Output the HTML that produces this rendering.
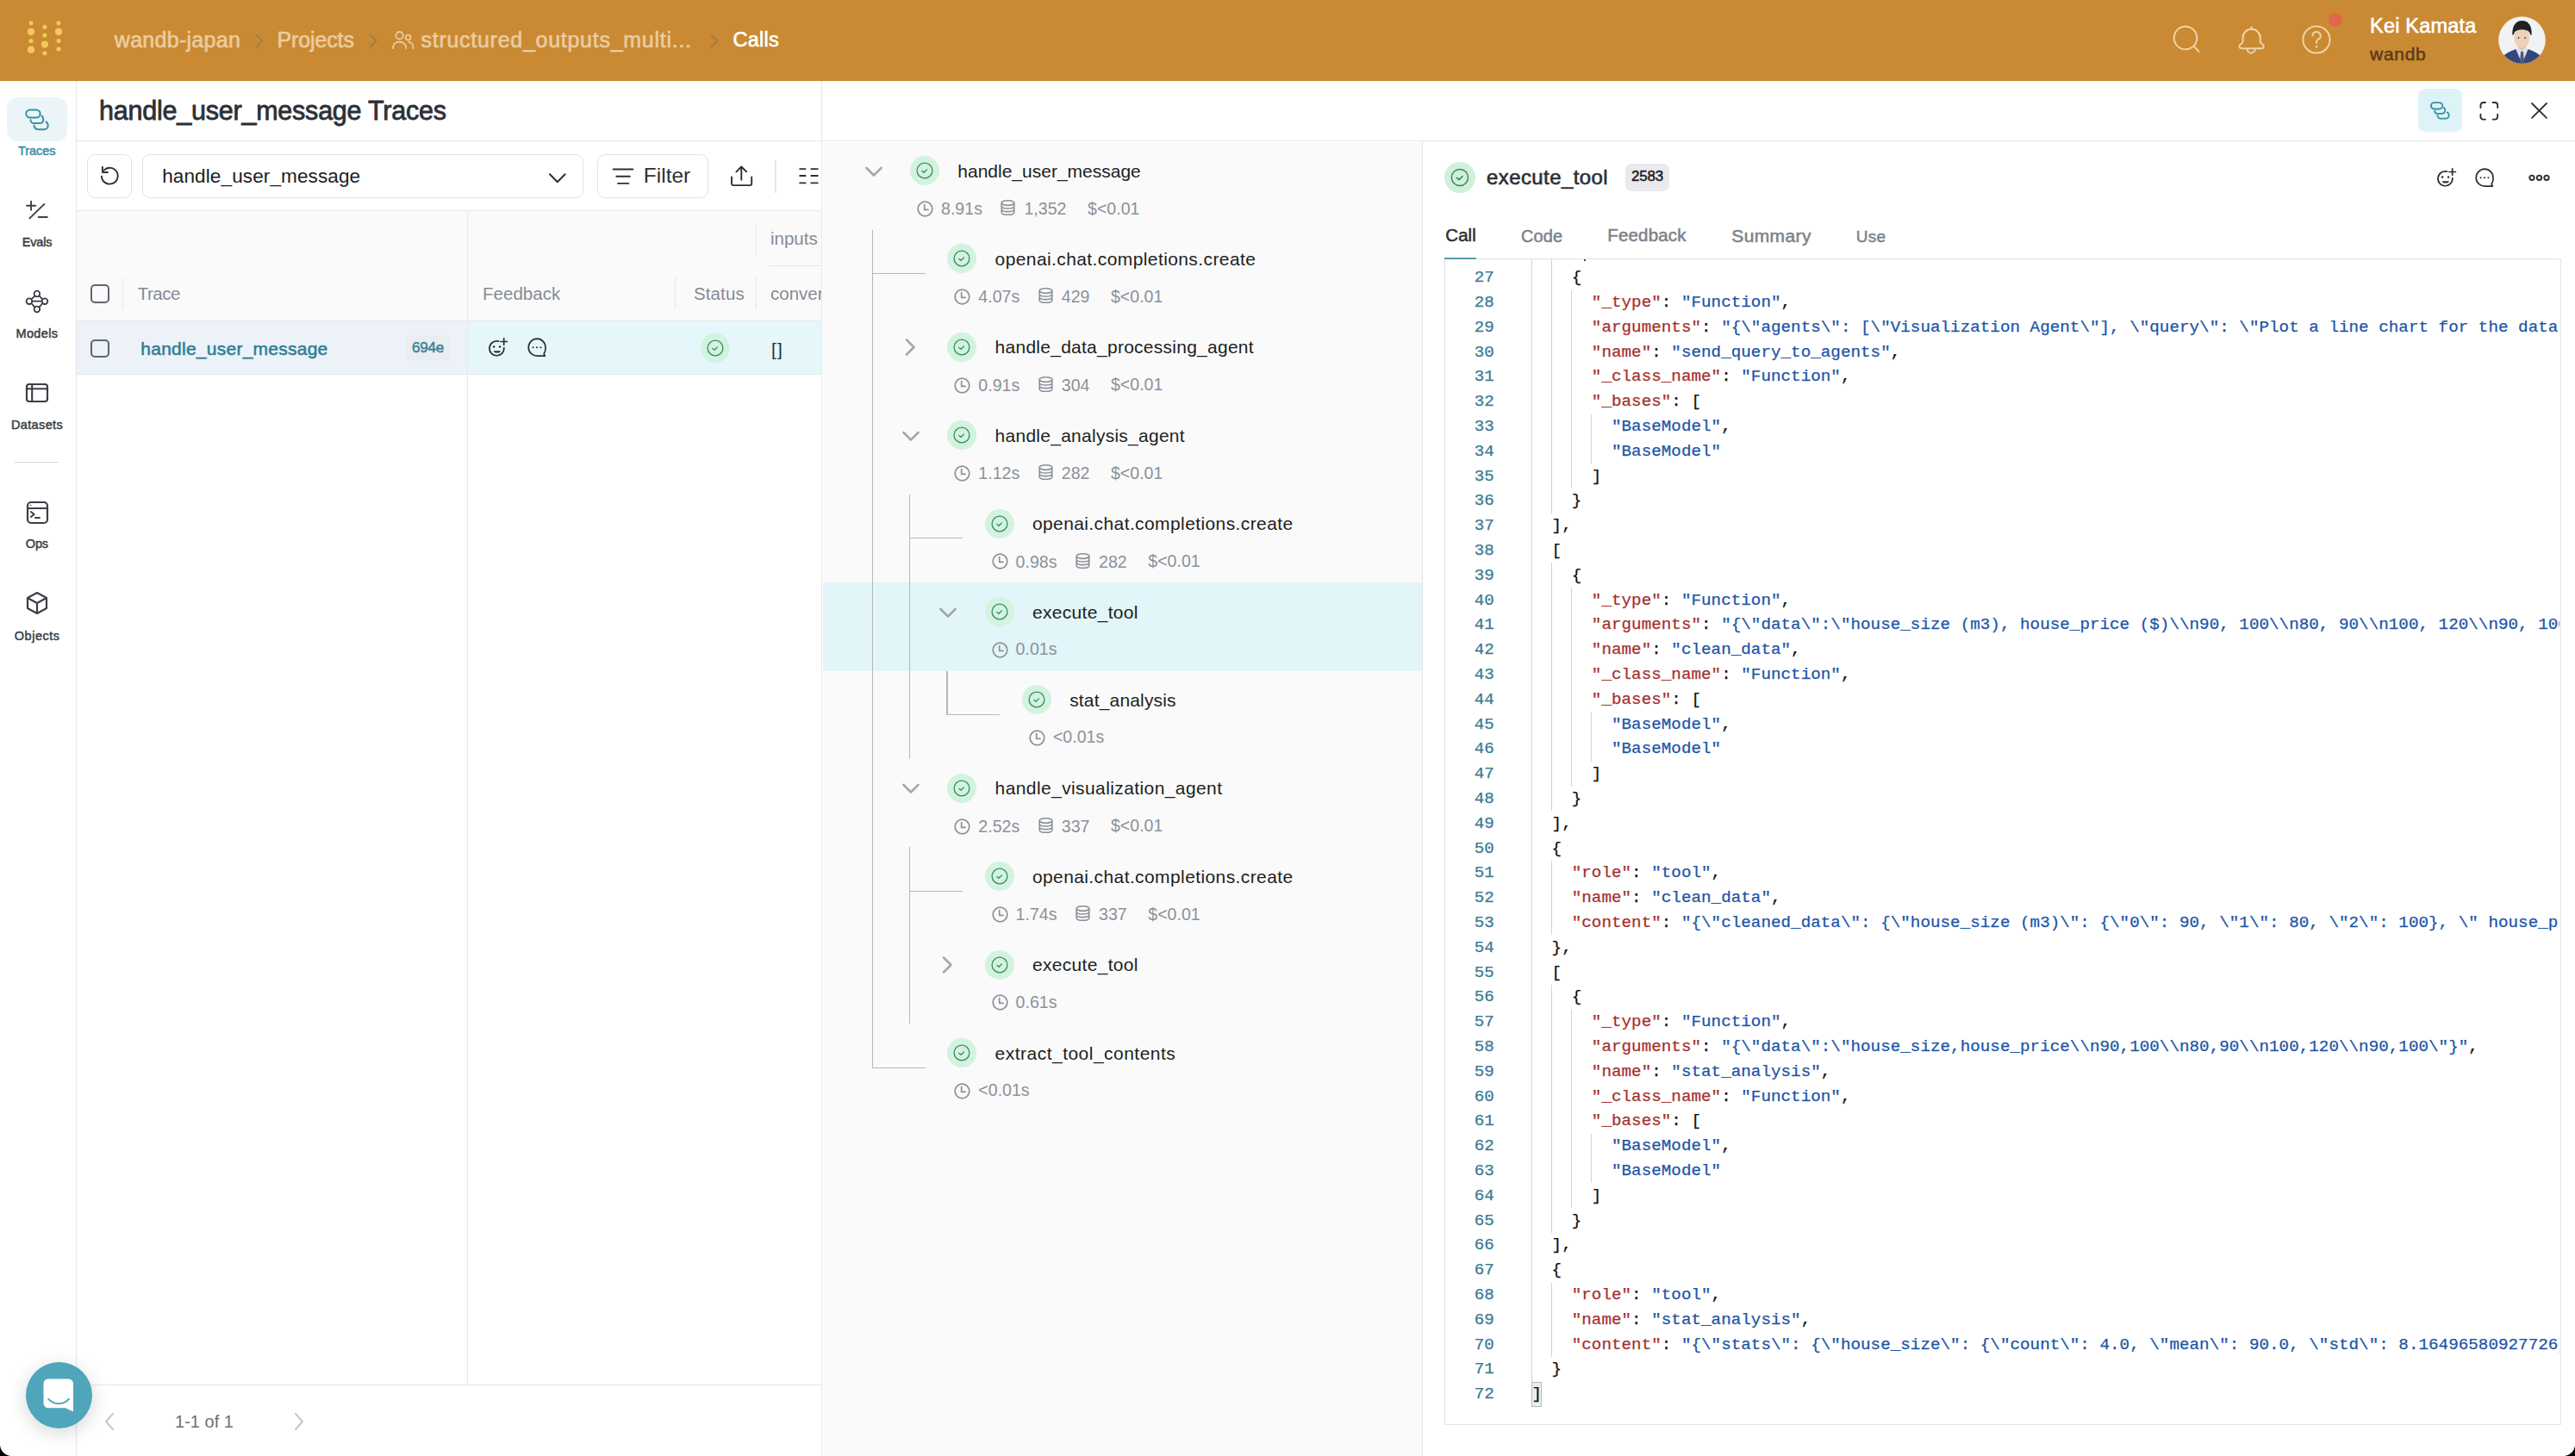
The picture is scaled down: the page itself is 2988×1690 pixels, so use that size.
<!DOCTYPE html><html><head><meta charset="utf-8"><style>*{margin:0;padding:0}html,body{width:2988px;height:1690px;overflow:hidden;background:#fff}
body{position:relative;font-family:'Liberation Sans',sans-serif}
.t{position:absolute;line-height:1;white-space:pre}
.cd{-webkit-text-stroke:0.25px currentColor}
.met span{position:absolute}</style></head><body><div style="position:absolute;left:0.00px;top:0.00px;width:2988.00px;height:94.00px;background:#c98a33"></div>
<svg style="position:absolute;left:0.00px;top:0.00px;" width="100" height="94" viewBox="0 0 100 94" fill="none"><circle cx="36" cy="26.8" r="2.5" fill="#f4c95a"/><circle cx="36" cy="36.8" r="4.1" fill="#f4c95a"/><circle cx="36" cy="47.4" r="2.5" fill="#f4c95a"/><circle cx="36" cy="57.7" r="4.1" fill="#f4c95a"/><circle cx="51.9" cy="31.3" r="2.5" fill="#f4c95a"/><circle cx="51.9" cy="40.9" r="2.5" fill="#f4c95a"/><circle cx="51.9" cy="51.5" r="4.1" fill="#f4c95a"/><circle cx="51.9" cy="61.8" r="2.5" fill="#f4c95a"/><circle cx="68" cy="26.8" r="2.5" fill="#f4c95a"/><circle cx="68" cy="36.8" r="4.1" fill="#f4c95a"/><circle cx="68" cy="47.4" r="2.5" fill="#f4c95a"/><circle cx="68" cy="57" r="2.5" fill="#f4c95a"/></svg>
<div class="t" style="left:132.80px;top:33.85px;font-size:25px;color:#ebcc9e;-webkit-text-stroke:0.65px #ebcc9e;letter-spacing:0.283px;">wandb-japan</div>
<svg style="position:absolute;left:294.50px;top:38.00px;" width="12" height="19" viewBox="0 0 12 19" fill="none"><path d="M2.5 2.5 L9.5 9.5 L2.5 16.5" stroke="#9a7a4a" stroke-width="1.7" stroke-linecap="round" stroke-linejoin="round"/></svg>
<div class="t" style="left:321.60px;top:33.85px;font-size:25px;color:#ebcc9e;-webkit-text-stroke:0.65px #ebcc9e;letter-spacing:-0.145px;">Projects</div>
<svg style="position:absolute;left:427.00px;top:38.00px;" width="12" height="19" viewBox="0 0 12 19" fill="none"><path d="M2.5 2.5 L9.5 9.5 L2.5 16.5" stroke="#9a7a4a" stroke-width="1.7" stroke-linecap="round" stroke-linejoin="round"/></svg>
<svg style="position:absolute;left:454.00px;top:35.00px;" width="28" height="24" viewBox="0 0 28 24" fill="none"><circle cx="9.6" cy="6.2" r="4.2" stroke="#ebcc9e" stroke-width="1.8"/><path d="M2 21 v-1 a7.6 6.5 0 0 1 15.2 0 v1" stroke="#ebcc9e" stroke-width="1.8" stroke-linecap="round"/><circle cx="19.6" cy="8.6" r="2.9" stroke="#ebcc9e" stroke-width="1.8"/><path d="M20.5 14 a4.8 5 0 0 1 4.8 5 v2" stroke="#ebcc9e" stroke-width="1.8" stroke-linecap="round"/></svg>
<div class="t" style="left:488.50px;top:33.85px;font-size:25px;color:#ebcc9e;-webkit-text-stroke:0.65px #ebcc9e;letter-spacing:0.727px;">structured_outputs_multi...</div>
<svg style="position:absolute;left:823.00px;top:38.00px;" width="12" height="19" viewBox="0 0 12 19" fill="none"><path d="M2.5 2.5 L9.5 9.5 L2.5 16.5" stroke="#9a7a4a" stroke-width="1.7" stroke-linecap="round" stroke-linejoin="round"/></svg>
<div class="t" style="left:850.50px;top:35.12px;font-size:23.5px;color:#ffffff;-webkit-text-stroke:0.61px #ffffff;letter-spacing:0.241px;">Calls</div>
<svg style="position:absolute;left:2518.00px;top:28.00px;" width="38" height="38" viewBox="0 0 38 38" fill="none"><circle cx="18" cy="16" r="13.3" stroke="#efd3a6" stroke-width="2"/><path d="M27.8 25.8 L33.5 32" stroke="#efd3a6" stroke-width="2" stroke-linecap="round"/></svg>
<svg style="position:absolute;left:2594.00px;top:28.00px;" width="36" height="38" viewBox="0 0 36 38" fill="none"><path d="M18.65 3.6 V5.8" stroke="#efd3a6" stroke-width="2.2" stroke-linecap="round"/><path d="M8.5 20.5 V16 A10.15 10.15 0 0 1 28.8 16 V20.5 C28.8 22.5 32.8 23.5 32.8 25.4 C32.8 27.1 31.8 28.2 30.1 28.2 H7.2 C5.5 28.2 4.5 27.1 4.5 25.4 C4.5 23.5 8.5 22.5 8.5 20.5 Z M13.6 28.2 A4.65 5.2 0 0 0 22.9 28.2" stroke="#efd3a6" stroke-width="2" stroke-linejoin="round"/></svg>
<svg style="position:absolute;left:2670.00px;top:29.00px;" width="36" height="36" viewBox="0 0 36 36" fill="none"><circle cx="18" cy="17" r="15.6" stroke="#efd3a6" stroke-width="2"/><path d="M13.5 12.5 a4.6 4.6 0 1 1 6.6 4.2 c-1.4 0.8 -2.1 1.5 -2.1 3.3 v1" stroke="#efd3a6" stroke-width="2" stroke-linecap="round"/><circle cx="18" cy="25.2" r="1.3" fill="#efd3a6"/></svg>
<div style="position:absolute;left:2701.50px;top:15.30px;width:16.00px;height:16.00px;background:#e0674a;border-radius:50%"></div>
<div class="t" style="left:2750.00px;top:18.82px;font-size:23.5px;color:#ffffff;-webkit-text-stroke:0.61px #ffffff;letter-spacing:0.213px;">Kei Kamata</div>
<div class="t" style="left:2750.00px;top:52.15px;font-size:21px;color:#5e3a1a;-webkit-text-stroke:0.55px #5e3a1a;letter-spacing:0.727px;">wandb</div>
<svg style="position:absolute;left:2898.50px;top:18.50px;" width="55" height="55" viewBox="0 0 55 55" fill="none"><defs><clipPath id="av"><circle cx="27.5" cy="27.5" r="27.3"/></clipPath></defs><g clip-path="url(#av)"><rect width="55" height="55" fill="#f1f2f4"/><rect x="23" y="33" width="9" height="7" fill="#e3bea3"/><ellipse cx="27.3" cy="24.6" rx="8.9" ry="12.6" fill="#efd0ba"/><path d="M16.5 22 C15.5 12 20 5 27.5 5 C35 5 39.5 11 38.6 22 L37 21 C36.5 17 33 15.5 27.5 15.2 C22 15.5 18.5 17 18 21 Z" fill="#202126"/><circle cx="23.6" cy="24.8" r="0.9" fill="#3a2a22"/><circle cx="31.2" cy="24.8" r="0.9" fill="#3a2a22"/><path d="M2 55 L7 45 C12 41 18 38.8 21.5 38 L27.5 55 L33.5 38 C37 38.8 43 41 48 45 L53 55 Z" fill="#34477d"/><path d="M20.5 38.3 L27.5 55 L34.5 38.3 L31.2 36.8 L27.5 39.6 L23.8 36.8 Z" fill="#dbe2ee"/><path d="M26 41.5 L24.8 55 H30.2 L29 41.5 L27.5 40 Z" fill="#4d5b7a"/></g></svg>
<div style="position:absolute;left:88.00px;top:94.00px;width:1.00px;height:1596.00px;background:#e4e6ea"></div>
<div style="position:absolute;left:8.00px;top:113.00px;width:70.00px;height:50.50px;background:#ebf4f7;border-radius:12px"></div>
<svg style="position:absolute;left:28.00px;top:125.00px;" width="30" height="28" viewBox="0 0 30 28" fill="none"><rect x="2.3" y="2.5" width="16.3" height="9.1" rx="4.5" stroke="#3a8fa5" stroke-width="2"/><path d="M7.5 14.2 A4 4 0 0 0 11.5 18.1 H18.2 A4 4 0 0 0 22.2 14.1 V13 A4 4 0 0 0 20.3 9.6 M11.6 20.5 A4.5 4.5 0 0 0 16.1 25.2 H23.2 A4.5 4.5 0 0 0 27.7 20.7 V20 A4.5 4.5 0 0 0 25.4 16.3" stroke="#3a8fa5" stroke-width="2" stroke-linecap="round"/></svg>
<div class="t" style="left:20.90px;top:168.28px;font-size:14.5px;color:#3a8fa5;-webkit-text-stroke:0.50px #3a8fa5;letter-spacing:-0.016px;">Traces</div>
<svg style="position:absolute;left:30.00px;top:232.00px;" width="27" height="24" viewBox="0 0 27 24" fill="none"><path d="M1.1 6.7 H11.1 M6.1 1.7 V11.7 M4.4 21.4 L21.4 4.9 M14.7 20 H24.8" stroke="#3b3f45" stroke-width="1.9" stroke-linecap="round"/></svg>
<div class="t" style="left:25.80px;top:274.18px;font-size:14.5px;color:#3b3f45;-webkit-text-stroke:0.50px #3b3f45;letter-spacing:-0.217px;">Evals</div>
<svg style="position:absolute;left:29.00px;top:336.00px;" width="28" height="28" viewBox="0 0 28 28" fill="none"><circle cx="13.9" cy="5" r="3.3" stroke="#3b3f45" stroke-width="1.8"/><circle cx="13.9" cy="23" r="3.3" stroke="#3b3f45" stroke-width="1.8"/><circle cx="4.9" cy="13.7" r="3.3" stroke="#3b3f45" stroke-width="1.8"/><circle cx="23" cy="13.7" r="3.3" stroke="#3b3f45" stroke-width="1.8"/><path d="M8.2 13.7 H19.7 M11.5 7.3 L7.3 11.4 M16.3 7.3 L20.6 11.4 M11.5 20.7 L7.3 16 M16.3 20.7 L20.6 16" stroke="#3b3f45" stroke-width="1.8"/></svg>
<div class="t" style="left:18.50px;top:380.38px;font-size:14.5px;color:#3b3f45;-webkit-text-stroke:0.50px #3b3f45;letter-spacing:0.350px;">Models</div>
<svg style="position:absolute;left:29.00px;top:444.00px;" width="28" height="24" viewBox="0 0 28 24" fill="none"><rect x="2" y="2" width="24" height="20" rx="3" stroke="#3b3f45" stroke-width="2.2"/><path d="M2 7.3 h24 M8.2 2 v20" stroke="#3b3f45" stroke-width="2.1"/></svg>
<div class="t" style="left:13.00px;top:485.57px;font-size:14.5px;color:#3b3f45;-webkit-text-stroke:0.50px #3b3f45;letter-spacing:0.352px;">Datasets</div>
<div style="position:absolute;left:17.00px;top:536.00px;width:51.00px;height:1.20px;background:#d5d8dc"></div>
<svg style="position:absolute;left:30.00px;top:581.00px;" width="27" height="28" viewBox="0 0 27 28" fill="none"><rect x="2" y="2" width="23" height="24" rx="4" stroke="#3b3f45" stroke-width="2.2"/><path d="M2 9 h23" stroke="#3b3f45" stroke-width="2"/><path d="M6 13 l3.5 3 l-3.5 3 M11 20 h5" stroke="#3b3f45" stroke-width="2" stroke-linecap="round"/><circle cx="5.5" cy="5.5" r="0.8" fill="#3b3f45"/></svg>
<div class="t" style="left:29.80px;top:624.27px;font-size:14.5px;color:#3b3f45;-webkit-text-stroke:0.50px #3b3f45;letter-spacing:-0.197px;">Ops</div>
<svg style="position:absolute;left:29.00px;top:686.00px;" width="28" height="28" viewBox="0 0 28 28" fill="none"><path d="M14 2 L25 8 V20 L14 26 L3 20 V8 Z M3 8 L14 14 L25 8 M14 14 V26" stroke="#3b3f45" stroke-width="2.2" stroke-linejoin="round"/></svg>
<div class="t" style="left:16.80px;top:730.57px;font-size:14.5px;color:#3b3f45;-webkit-text-stroke:0.50px #3b3f45;letter-spacing:0.505px;">Objects</div>
<div class="t" style="left:115.00px;top:112.77px;font-size:30.5px;color:#2b3036;-webkit-text-stroke:0.79px #2b3036;letter-spacing:-0.224px;">handle_user_message Traces</div>
<div style="position:absolute;left:89.00px;top:163.00px;width:2899.00px;height:1.00px;background:#e5e7eb"></div>
<div style="position:absolute;left:953.00px;top:94.00px;width:1.00px;height:1596.00px;background:#e5e7eb"></div>
<div style="position:absolute;left:101.00px;top:179.00px;width:52.00px;height:51.00px;border:1.5px solid #dfe2e6;border-radius:9px;box-sizing:border-box;background:#fff"></div>
<svg style="position:absolute;left:113.00px;top:190.00px;" width="28" height="28" viewBox="0 0 28 28" fill="none"><path d="M7.6 7.6 A9.4 9.4 0 1 1 4.9 14.6" stroke="#2b3036" stroke-width="1.9" stroke-linecap="round"/><path d="M5.9 3.6 V10 H12" stroke="#2b3036" stroke-width="1.9" stroke-linecap="round" stroke-linejoin="round"/></svg>
<div style="position:absolute;left:165.00px;top:179.00px;width:512.00px;height:51.00px;border:1.5px solid #dfe2e6;border-radius:9px;box-sizing:border-box;background:#fff"></div>
<div class="t" style="left:188.20px;top:193.59px;font-size:22.6px;color:#1c1e21;letter-spacing:0.077px;">handle_user_message</div>
<svg style="position:absolute;left:634.00px;top:198.00px;" width="26" height="18" viewBox="0 0 26 18" fill="none"><path d="M4 4.2 L12.8 13.2 L21.6 4.2" stroke="#2b3036" stroke-width="2" stroke-linecap="round" stroke-linejoin="round"/></svg>
<div style="position:absolute;left:693.40px;top:179.00px;width:128.50px;height:51.00px;border:1.5px solid #dfe2e6;border-radius:9px;box-sizing:border-box;background:#fff"></div>
<svg style="position:absolute;left:709.00px;top:193.00px;" width="30" height="24" viewBox="0 0 30 24" fill="none"><path d="M2.6 3.5 H25.4 M6.3 11.7 H21.9 M8 19.9 H20.3" stroke="#2b3036" stroke-width="1.9" stroke-linecap="round"/></svg>
<div class="t" style="left:746.80px;top:192.38px;font-size:24.5px;color:#2b3036;">Filter</div>
<svg style="position:absolute;left:846.00px;top:191.00px;" width="28" height="28" viewBox="0 0 28 28" fill="none"><path d="M14.3 17.7 V3 M8.4 8.4 L14.3 2.5 L20.2 8.4" stroke="#2b3036" stroke-width="1.9" stroke-linecap="round" stroke-linejoin="round"/><path d="M3 14.4 V22.3 a1.8 1.8 0 0 0 1.8 1.8 H24.4 a1.8 1.8 0 0 0 1.8-1.8 V14.4" stroke="#2b3036" stroke-width="1.9" stroke-linecap="round"/></svg>
<div style="position:absolute;left:899.00px;top:186.00px;width:1.50px;height:38.00px;background:#e5e7eb"></div>
<svg style="position:absolute;left:926.00px;top:193.00px;" width="28" height="24" viewBox="0 0 28 24" fill="none"><path d="M2.2 3.1 h6.4 M2.2 11 h6.4 M2.2 19.4 h6.4 M15.3 3.1 h7.5 M15.3 11 h7.5 M15.3 19.4 h7.5" stroke="#2b3036" stroke-width="1.9" stroke-linecap="round"/></svg>
<div style="position:absolute;left:953.00px;top:94.00px;width:1.00px;height:1596.00px;background:#e5e7eb"></div>
<div style="position:absolute;left:89.00px;top:244.00px;width:864.00px;height:1.00px;background:#e5e7eb"></div>
<div style="position:absolute;left:89.00px;top:245.00px;width:864.00px;height:127.00px;background:#fafafa"></div>
<div style="position:absolute;left:89.00px;top:372.00px;width:864.00px;height:1.00px;background:#e5e7eb"></div>
<div style="position:absolute;left:89.00px;top:373.00px;width:453.00px;height:61.00px;background:#edf2f8"></div>
<div style="position:absolute;left:543.00px;top:373.00px;width:410.00px;height:61.00px;background:#e5f7fa"></div>
<div style="position:absolute;left:89.00px;top:434.00px;width:864.00px;height:1.00px;background:#e5e7eb"></div>
<div style="position:absolute;left:542.00px;top:245.00px;width:1.00px;height:1362.00px;background:#e5e7eb"></div>
<div style="position:absolute;left:142.00px;top:322.00px;width:1.20px;height:37.00px;background:#e5e7eb"></div>
<div style="position:absolute;left:782.50px;top:322.00px;width:1.50px;height:37.00px;background:#e5e7eb"></div>
<div style="position:absolute;left:876.50px;top:322.00px;width:1.50px;height:37.00px;background:#e5e7eb"></div>
<div style="position:absolute;left:876.50px;top:258.50px;width:1.50px;height:37.00px;background:#e5e7eb"></div>
<div style="position:absolute;left:893.00px;top:307.50px;width:60.00px;height:1.50px;background:#e5e7eb"></div>
<div style="position:absolute;left:105.30px;top:330.30px;width:21.50px;height:21.50px;border:2px solid #5f6670;border-radius:5px;box-sizing:border-box"></div>
<div style="position:absolute;left:105.30px;top:393.50px;width:21.50px;height:21.50px;border:2px solid #5f6670;border-radius:5px;box-sizing:border-box"></div>
<div class="t" style="left:159.70px;top:331.38px;font-size:20.5px;color:#858b94;letter-spacing:-0.460px;">Trace</div>
<div class="t" style="left:560.00px;top:331.38px;font-size:20.5px;color:#858b94;letter-spacing:0.024px;">Feedback</div>
<div class="t" style="left:805.00px;top:331.38px;font-size:20.5px;color:#858b94;letter-spacing:0.115px;">Status</div>
<div style="position:absolute;left:893px;top:250px;width:60px;height:120px;overflow:hidden">
<div class="t" style="left:1.00px;top:17.07px;font-size:20.5px;color:#858b94;">inputs</div>
<div class="t" style="left:1.00px;top:81.38px;font-size:20.5px;color:#858b94;">conversation</div>
</div>
<div class="t" style="left:163.30px;top:394.15px;font-size:21px;color:#2f7f93;-webkit-text-stroke:0.55px #2f7f93;letter-spacing:0.251px;">handle_user_message</div>
<div style="position:absolute;left:471.00px;top:388.70px;width:51.70px;height:30.70px;background:#eaedf1;border-radius:6px"></div>
<div class="t" style="left:477.90px;top:394.55px;font-size:17px;color:#3a8097;-webkit-text-stroke:0.50px #3a8097;letter-spacing:-0.143px;">694e</div>
<svg style="position:absolute;left:565.80px;top:392.00px;" width="26" height="26" viewBox="0 0 26 26" fill="none"><path d="M12.6 4.14 A8.45 8.45 0 1 0 18.8 11.56" stroke="#2b3036" stroke-width="1.7" stroke-linecap="round"/><circle cx="7.1" cy="10.4" r="1.25" fill="#2b3036"/><circle cx="14.1" cy="10.4" r="1.25" fill="#2b3036"/><path d="M6.8 15.2 H14.8 A4 2.4 0 0 1 6.8 15.2 Z" fill="#2b3036"/><path d="M18.7 0.8 v7.4 M15 4.5 h7.4" stroke="#2b3036" stroke-width="1.7" stroke-linecap="round"/></svg>
<svg style="position:absolute;left:610.50px;top:391.00px;" width="26" height="26" viewBox="0 0 26 26" fill="none"><path d="M12 2.2 A10 10 0 1 0 12.5 22.2 H21.3 L20.2 19.6 A10.2 10.2 0 0 0 22 12.3 A10 10 0 0 0 12 2.2 Z" stroke="#2b3036" stroke-width="1.7" stroke-linejoin="round"/><circle cx="7.6" cy="12.3" r="1.05" fill="#2b3036"/><circle cx="12" cy="12.3" r="1.05" fill="#2b3036"/><circle cx="16.4" cy="12.3" r="1.05" fill="#2b3036"/></svg>
<div style="position:absolute;left:813.00px;top:387.40px;width:34.00px;height:34.00px;background:#d2f3df;border-radius:50%"></div>
<svg style="position:absolute;left:813.00px;top:387.40px;" width="34" height="34" viewBox="0 0 34 34" fill="none"><circle cx="17" cy="17" r="8.9" stroke="#3a8a5c" stroke-width="1.3"/><path d="M13.9 17.4 L16.1 19.3 L19.5 15.9" stroke="#3a8a5c" stroke-width="1.3" stroke-linecap="round" stroke-linejoin="round"/></svg>
<div class="t" style="left:895.00px;top:395.15px;font-size:21px;color:#2b3036;letter-spacing:1.2px;">[]</div>
<div style="position:absolute;left:89.00px;top:1607.00px;width:864.00px;height:1.00px;background:#e5e7eb"></div>
<svg style="position:absolute;left:118.00px;top:1638.00px;" width="18" height="24" viewBox="0 0 18 24" fill="none"><path d="M13 3 L5 12 L13 21" stroke="#c2c6cc" stroke-width="2" stroke-linecap="round" stroke-linejoin="round"/></svg>
<div class="t" style="left:203.00px;top:1640.00px;font-size:20px;color:#6b7079;letter-spacing:0.025px;">1-1 of 1</div>
<svg style="position:absolute;left:338.00px;top:1638.00px;" width="18" height="24" viewBox="0 0 18 24" fill="none"><path d="M5 3 L13 12 L5 21" stroke="#c2c6cc" stroke-width="2" stroke-linecap="round" stroke-linejoin="round"/></svg>
<div style="position:absolute;left:954.50px;top:164.50px;width:695.50px;height:1525.50px;background:#fafafa"></div>
<div style="position:absolute;left:1650.00px;top:164.00px;width:1.00px;height:1526.00px;background:#e2e4e8"></div>
<div style="position:absolute;left:1056.00px;top:181.00px;width:34.00px;height:34.00px;background:#d2f3df;border-radius:50%"></div>
<svg style="position:absolute;left:1056.00px;top:181.00px;" width="34" height="34" viewBox="0 0 34 34" fill="none"><circle cx="17" cy="17" r="8.9" stroke="#3a8a5c" stroke-width="1.3"/><path d="M13.9 17.4 L16.1 19.3 L19.5 15.9" stroke="#3a8a5c" stroke-width="1.3" stroke-linecap="round" stroke-linejoin="round"/></svg>
<svg style="position:absolute;left:1002.50px;top:191.50px;" width="22" height="16" viewBox="0 0 22 16" fill="none"><path d="M2.5 3 L11 11.5 L19.5 3" stroke="#a3a8af" stroke-width="2.6" stroke-linecap="round" stroke-linejoin="round"/></svg>
<div class="t" style="left:1111.30px;top:187.55px;font-size:21px;color:#1c1e21;letter-spacing:0.001px;">handle_user_message</div>
<svg style="position:absolute;left:1064.00px;top:232.70px;" width="19" height="19" viewBox="0 0 19 19" fill="none"><circle cx="9.5" cy="9.5" r="8.3" stroke="#8b919a" stroke-width="1.7"/><path d="M8.7 4.6 V10.4 H13" stroke="#8b919a" stroke-width="1.7" stroke-linecap="round" stroke-linejoin="round"/></svg>
<div class="t" style="left:1092.00px;top:232.04px;font-size:19.6px;color:#8b919a">8.91s<svg width="17" height="18" viewBox="0 0 17 18" fill="none" style="vertical-align:-1.5px;margin-left:21.5px;margin-right:10px"><ellipse cx="8.5" cy="3.6" rx="7.3" ry="2.8" stroke="#8b919a" stroke-width="1.6"/><path d="M1.2 3.6 V14.4 c0 1.6 3.3 2.8 7.3 2.8 s7.3-1.2 7.3-2.8 V3.6 M1.2 7.2 c0 1.6 3.3 2.8 7.3 2.8 s7.3-1.2 7.3-2.8 M1.2 10.8 c0 1.6 3.3 2.8 7.3 2.8 s7.3-1.2 7.3-2.8" stroke="#8b919a" stroke-width="1.6"/></svg>1,352<span style="margin-left:24.5px">$&lt;0.01</span></div>
<div style="position:absolute;left:1099.30px;top:283.40px;width:34.00px;height:34.00px;background:#d2f3df;border-radius:50%"></div>
<svg style="position:absolute;left:1099.30px;top:283.40px;" width="34" height="34" viewBox="0 0 34 34" fill="none"><circle cx="17" cy="17" r="8.9" stroke="#3a8a5c" stroke-width="1.3"/><path d="M13.9 17.4 L16.1 19.3 L19.5 15.9" stroke="#3a8a5c" stroke-width="1.3" stroke-linecap="round" stroke-linejoin="round"/></svg>
<div class="t" style="left:1154.60px;top:289.95px;font-size:21px;color:#1c1e21;letter-spacing:0.400px;">openai.chat.completions.create</div>
<svg style="position:absolute;left:1107.30px;top:335.10px;" width="19" height="19" viewBox="0 0 19 19" fill="none"><circle cx="9.5" cy="9.5" r="8.3" stroke="#8b919a" stroke-width="1.7"/><path d="M8.7 4.6 V10.4 H13" stroke="#8b919a" stroke-width="1.7" stroke-linecap="round" stroke-linejoin="round"/></svg>
<div class="t" style="left:1135.30px;top:334.44px;font-size:19.6px;color:#8b919a">4.07s<svg width="17" height="18" viewBox="0 0 17 18" fill="none" style="vertical-align:-1.5px;margin-left:21.5px;margin-right:10px"><ellipse cx="8.5" cy="3.6" rx="7.3" ry="2.8" stroke="#8b919a" stroke-width="1.6"/><path d="M1.2 3.6 V14.4 c0 1.6 3.3 2.8 7.3 2.8 s7.3-1.2 7.3-2.8 V3.6 M1.2 7.2 c0 1.6 3.3 2.8 7.3 2.8 s7.3-1.2 7.3-2.8 M1.2 10.8 c0 1.6 3.3 2.8 7.3 2.8 s7.3-1.2 7.3-2.8" stroke="#8b919a" stroke-width="1.6"/></svg>429<span style="margin-left:24.5px">$&lt;0.01</span></div>
<div style="position:absolute;left:1099.30px;top:385.80px;width:34.00px;height:34.00px;background:#d2f3df;border-radius:50%"></div>
<svg style="position:absolute;left:1099.30px;top:385.80px;" width="34" height="34" viewBox="0 0 34 34" fill="none"><circle cx="17" cy="17" r="8.9" stroke="#3a8a5c" stroke-width="1.3"/><path d="M13.9 17.4 L16.1 19.3 L19.5 15.9" stroke="#3a8a5c" stroke-width="1.3" stroke-linecap="round" stroke-linejoin="round"/></svg>
<svg style="position:absolute;left:1047.80px;top:391.80px;" width="16" height="22" viewBox="0 0 16 22" fill="none"><path d="M4 2.5 L12.5 11 L4 19.5" stroke="#a3a8af" stroke-width="2.6" stroke-linecap="round" stroke-linejoin="round"/></svg>
<div class="t" style="left:1154.60px;top:392.35px;font-size:21px;color:#1c1e21;letter-spacing:0.256px;">handle_data_processing_agent</div>
<svg style="position:absolute;left:1107.30px;top:437.50px;" width="19" height="19" viewBox="0 0 19 19" fill="none"><circle cx="9.5" cy="9.5" r="8.3" stroke="#8b919a" stroke-width="1.7"/><path d="M8.7 4.6 V10.4 H13" stroke="#8b919a" stroke-width="1.7" stroke-linecap="round" stroke-linejoin="round"/></svg>
<div class="t" style="left:1135.30px;top:436.84px;font-size:19.6px;color:#8b919a">0.91s<svg width="17" height="18" viewBox="0 0 17 18" fill="none" style="vertical-align:-1.5px;margin-left:21.5px;margin-right:10px"><ellipse cx="8.5" cy="3.6" rx="7.3" ry="2.8" stroke="#8b919a" stroke-width="1.6"/><path d="M1.2 3.6 V14.4 c0 1.6 3.3 2.8 7.3 2.8 s7.3-1.2 7.3-2.8 V3.6 M1.2 7.2 c0 1.6 3.3 2.8 7.3 2.8 s7.3-1.2 7.3-2.8 M1.2 10.8 c0 1.6 3.3 2.8 7.3 2.8 s7.3-1.2 7.3-2.8" stroke="#8b919a" stroke-width="1.6"/></svg>304<span style="margin-left:24.5px">$&lt;0.01</span></div>
<div style="position:absolute;left:1099.30px;top:488.20px;width:34.00px;height:34.00px;background:#d2f3df;border-radius:50%"></div>
<svg style="position:absolute;left:1099.30px;top:488.20px;" width="34" height="34" viewBox="0 0 34 34" fill="none"><circle cx="17" cy="17" r="8.9" stroke="#3a8a5c" stroke-width="1.3"/><path d="M13.9 17.4 L16.1 19.3 L19.5 15.9" stroke="#3a8a5c" stroke-width="1.3" stroke-linecap="round" stroke-linejoin="round"/></svg>
<svg style="position:absolute;left:1045.80px;top:498.70px;" width="22" height="16" viewBox="0 0 22 16" fill="none"><path d="M2.5 3 L11 11.5 L19.5 3" stroke="#a3a8af" stroke-width="2.6" stroke-linecap="round" stroke-linejoin="round"/></svg>
<div class="t" style="left:1154.60px;top:494.75px;font-size:21px;color:#1c1e21;letter-spacing:0.258px;">handle_analysis_agent</div>
<svg style="position:absolute;left:1107.30px;top:539.90px;" width="19" height="19" viewBox="0 0 19 19" fill="none"><circle cx="9.5" cy="9.5" r="8.3" stroke="#8b919a" stroke-width="1.7"/><path d="M8.7 4.6 V10.4 H13" stroke="#8b919a" stroke-width="1.7" stroke-linecap="round" stroke-linejoin="round"/></svg>
<div class="t" style="left:1135.30px;top:539.24px;font-size:19.6px;color:#8b919a">1.12s<svg width="17" height="18" viewBox="0 0 17 18" fill="none" style="vertical-align:-1.5px;margin-left:21.5px;margin-right:10px"><ellipse cx="8.5" cy="3.6" rx="7.3" ry="2.8" stroke="#8b919a" stroke-width="1.6"/><path d="M1.2 3.6 V14.4 c0 1.6 3.3 2.8 7.3 2.8 s7.3-1.2 7.3-2.8 V3.6 M1.2 7.2 c0 1.6 3.3 2.8 7.3 2.8 s7.3-1.2 7.3-2.8 M1.2 10.8 c0 1.6 3.3 2.8 7.3 2.8 s7.3-1.2 7.3-2.8" stroke="#8b919a" stroke-width="1.6"/></svg>282<span style="margin-left:24.5px">$&lt;0.01</span></div>
<div style="position:absolute;left:1142.60px;top:590.60px;width:34.00px;height:34.00px;background:#d2f3df;border-radius:50%"></div>
<svg style="position:absolute;left:1142.60px;top:590.60px;" width="34" height="34" viewBox="0 0 34 34" fill="none"><circle cx="17" cy="17" r="8.9" stroke="#3a8a5c" stroke-width="1.3"/><path d="M13.9 17.4 L16.1 19.3 L19.5 15.9" stroke="#3a8a5c" stroke-width="1.3" stroke-linecap="round" stroke-linejoin="round"/></svg>
<div class="t" style="left:1197.90px;top:597.15px;font-size:21px;color:#1c1e21;letter-spacing:0.400px;">openai.chat.completions.create</div>
<svg style="position:absolute;left:1150.60px;top:642.30px;" width="19" height="19" viewBox="0 0 19 19" fill="none"><circle cx="9.5" cy="9.5" r="8.3" stroke="#8b919a" stroke-width="1.7"/><path d="M8.7 4.6 V10.4 H13" stroke="#8b919a" stroke-width="1.7" stroke-linecap="round" stroke-linejoin="round"/></svg>
<div class="t" style="left:1178.60px;top:641.64px;font-size:19.6px;color:#8b919a">0.98s<svg width="17" height="18" viewBox="0 0 17 18" fill="none" style="vertical-align:-1.5px;margin-left:21.5px;margin-right:10px"><ellipse cx="8.5" cy="3.6" rx="7.3" ry="2.8" stroke="#8b919a" stroke-width="1.6"/><path d="M1.2 3.6 V14.4 c0 1.6 3.3 2.8 7.3 2.8 s7.3-1.2 7.3-2.8 V3.6 M1.2 7.2 c0 1.6 3.3 2.8 7.3 2.8 s7.3-1.2 7.3-2.8 M1.2 10.8 c0 1.6 3.3 2.8 7.3 2.8 s7.3-1.2 7.3-2.8" stroke="#8b919a" stroke-width="1.6"/></svg>282<span style="margin-left:24.5px">$&lt;0.01</span></div>
<div style="position:absolute;left:954.50px;top:676.20px;width:695.50px;height:102.40px;background:#e2f5f8"></div>
<div style="position:absolute;left:1142.60px;top:693.00px;width:34.00px;height:34.00px;background:#d2f3df;border-radius:50%"></div>
<svg style="position:absolute;left:1142.60px;top:693.00px;" width="34" height="34" viewBox="0 0 34 34" fill="none"><circle cx="17" cy="17" r="8.9" stroke="#3a8a5c" stroke-width="1.3"/><path d="M13.9 17.4 L16.1 19.3 L19.5 15.9" stroke="#3a8a5c" stroke-width="1.3" stroke-linecap="round" stroke-linejoin="round"/></svg>
<svg style="position:absolute;left:1089.10px;top:703.50px;" width="22" height="16" viewBox="0 0 22 16" fill="none"><path d="M2.5 3 L11 11.5 L19.5 3" stroke="#a3a8af" stroke-width="2.6" stroke-linecap="round" stroke-linejoin="round"/></svg>
<div class="t" style="left:1197.90px;top:699.55px;font-size:21px;color:#1c1e21;letter-spacing:0.319px;">execute_tool</div>
<svg style="position:absolute;left:1150.60px;top:744.70px;" width="19" height="19" viewBox="0 0 19 19" fill="none"><circle cx="9.5" cy="9.5" r="8.3" stroke="#8b919a" stroke-width="1.7"/><path d="M8.7 4.6 V10.4 H13" stroke="#8b919a" stroke-width="1.7" stroke-linecap="round" stroke-linejoin="round"/></svg>
<div class="t" style="left:1178.60px;top:744.04px;font-size:19.6px;color:#8b919a">0.01s</div>
<div style="position:absolute;left:1185.90px;top:795.40px;width:34.00px;height:34.00px;background:#d2f3df;border-radius:50%"></div>
<svg style="position:absolute;left:1185.90px;top:795.40px;" width="34" height="34" viewBox="0 0 34 34" fill="none"><circle cx="17" cy="17" r="8.9" stroke="#3a8a5c" stroke-width="1.3"/><path d="M13.9 17.4 L16.1 19.3 L19.5 15.9" stroke="#3a8a5c" stroke-width="1.3" stroke-linecap="round" stroke-linejoin="round"/></svg>
<div class="t" style="left:1241.20px;top:801.95px;font-size:21px;color:#1c1e21;letter-spacing:0.166px;">stat_analysis</div>
<svg style="position:absolute;left:1193.90px;top:847.10px;" width="19" height="19" viewBox="0 0 19 19" fill="none"><circle cx="9.5" cy="9.5" r="8.3" stroke="#8b919a" stroke-width="1.7"/><path d="M8.7 4.6 V10.4 H13" stroke="#8b919a" stroke-width="1.7" stroke-linecap="round" stroke-linejoin="round"/></svg>
<div class="t" style="left:1221.90px;top:846.44px;font-size:19.6px;color:#8b919a">&lt;0.01s</div>
<div style="position:absolute;left:1099.30px;top:897.80px;width:34.00px;height:34.00px;background:#d2f3df;border-radius:50%"></div>
<svg style="position:absolute;left:1099.30px;top:897.80px;" width="34" height="34" viewBox="0 0 34 34" fill="none"><circle cx="17" cy="17" r="8.9" stroke="#3a8a5c" stroke-width="1.3"/><path d="M13.9 17.4 L16.1 19.3 L19.5 15.9" stroke="#3a8a5c" stroke-width="1.3" stroke-linecap="round" stroke-linejoin="round"/></svg>
<svg style="position:absolute;left:1045.80px;top:908.30px;" width="22" height="16" viewBox="0 0 22 16" fill="none"><path d="M2.5 3 L11 11.5 L19.5 3" stroke="#a3a8af" stroke-width="2.6" stroke-linecap="round" stroke-linejoin="round"/></svg>
<div class="t" style="left:1154.60px;top:904.35px;font-size:21px;color:#1c1e21;letter-spacing:0.401px;">handle_visualization_agent</div>
<svg style="position:absolute;left:1107.30px;top:949.50px;" width="19" height="19" viewBox="0 0 19 19" fill="none"><circle cx="9.5" cy="9.5" r="8.3" stroke="#8b919a" stroke-width="1.7"/><path d="M8.7 4.6 V10.4 H13" stroke="#8b919a" stroke-width="1.7" stroke-linecap="round" stroke-linejoin="round"/></svg>
<div class="t" style="left:1135.30px;top:948.84px;font-size:19.6px;color:#8b919a">2.52s<svg width="17" height="18" viewBox="0 0 17 18" fill="none" style="vertical-align:-1.5px;margin-left:21.5px;margin-right:10px"><ellipse cx="8.5" cy="3.6" rx="7.3" ry="2.8" stroke="#8b919a" stroke-width="1.6"/><path d="M1.2 3.6 V14.4 c0 1.6 3.3 2.8 7.3 2.8 s7.3-1.2 7.3-2.8 V3.6 M1.2 7.2 c0 1.6 3.3 2.8 7.3 2.8 s7.3-1.2 7.3-2.8 M1.2 10.8 c0 1.6 3.3 2.8 7.3 2.8 s7.3-1.2 7.3-2.8" stroke="#8b919a" stroke-width="1.6"/></svg>337<span style="margin-left:24.5px">$&lt;0.01</span></div>
<div style="position:absolute;left:1142.60px;top:1000.20px;width:34.00px;height:34.00px;background:#d2f3df;border-radius:50%"></div>
<svg style="position:absolute;left:1142.60px;top:1000.20px;" width="34" height="34" viewBox="0 0 34 34" fill="none"><circle cx="17" cy="17" r="8.9" stroke="#3a8a5c" stroke-width="1.3"/><path d="M13.9 17.4 L16.1 19.3 L19.5 15.9" stroke="#3a8a5c" stroke-width="1.3" stroke-linecap="round" stroke-linejoin="round"/></svg>
<div class="t" style="left:1197.90px;top:1006.75px;font-size:21px;color:#1c1e21;letter-spacing:0.400px;">openai.chat.completions.create</div>
<svg style="position:absolute;left:1150.60px;top:1051.90px;" width="19" height="19" viewBox="0 0 19 19" fill="none"><circle cx="9.5" cy="9.5" r="8.3" stroke="#8b919a" stroke-width="1.7"/><path d="M8.7 4.6 V10.4 H13" stroke="#8b919a" stroke-width="1.7" stroke-linecap="round" stroke-linejoin="round"/></svg>
<div class="t" style="left:1178.60px;top:1051.24px;font-size:19.6px;color:#8b919a">1.74s<svg width="17" height="18" viewBox="0 0 17 18" fill="none" style="vertical-align:-1.5px;margin-left:21.5px;margin-right:10px"><ellipse cx="8.5" cy="3.6" rx="7.3" ry="2.8" stroke="#8b919a" stroke-width="1.6"/><path d="M1.2 3.6 V14.4 c0 1.6 3.3 2.8 7.3 2.8 s7.3-1.2 7.3-2.8 V3.6 M1.2 7.2 c0 1.6 3.3 2.8 7.3 2.8 s7.3-1.2 7.3-2.8 M1.2 10.8 c0 1.6 3.3 2.8 7.3 2.8 s7.3-1.2 7.3-2.8" stroke="#8b919a" stroke-width="1.6"/></svg>337<span style="margin-left:24.5px">$&lt;0.01</span></div>
<div style="position:absolute;left:1142.60px;top:1102.60px;width:34.00px;height:34.00px;background:#d2f3df;border-radius:50%"></div>
<svg style="position:absolute;left:1142.60px;top:1102.60px;" width="34" height="34" viewBox="0 0 34 34" fill="none"><circle cx="17" cy="17" r="8.9" stroke="#3a8a5c" stroke-width="1.3"/><path d="M13.9 17.4 L16.1 19.3 L19.5 15.9" stroke="#3a8a5c" stroke-width="1.3" stroke-linecap="round" stroke-linejoin="round"/></svg>
<svg style="position:absolute;left:1091.10px;top:1108.60px;" width="16" height="22" viewBox="0 0 16 22" fill="none"><path d="M4 2.5 L12.5 11 L4 19.5" stroke="#a3a8af" stroke-width="2.6" stroke-linecap="round" stroke-linejoin="round"/></svg>
<div class="t" style="left:1197.90px;top:1109.15px;font-size:21px;color:#1c1e21;letter-spacing:0.319px;">execute_tool</div>
<svg style="position:absolute;left:1150.60px;top:1154.30px;" width="19" height="19" viewBox="0 0 19 19" fill="none"><circle cx="9.5" cy="9.5" r="8.3" stroke="#8b919a" stroke-width="1.7"/><path d="M8.7 4.6 V10.4 H13" stroke="#8b919a" stroke-width="1.7" stroke-linecap="round" stroke-linejoin="round"/></svg>
<div class="t" style="left:1178.60px;top:1153.64px;font-size:19.6px;color:#8b919a">0.61s</div>
<div style="position:absolute;left:1099.30px;top:1205.00px;width:34.00px;height:34.00px;background:#d2f3df;border-radius:50%"></div>
<svg style="position:absolute;left:1099.30px;top:1205.00px;" width="34" height="34" viewBox="0 0 34 34" fill="none"><circle cx="17" cy="17" r="8.9" stroke="#3a8a5c" stroke-width="1.3"/><path d="M13.9 17.4 L16.1 19.3 L19.5 15.9" stroke="#3a8a5c" stroke-width="1.3" stroke-linecap="round" stroke-linejoin="round"/></svg>
<div class="t" style="left:1154.60px;top:1211.55px;font-size:21px;color:#1c1e21;letter-spacing:0.479px;">extract_tool_contents</div>
<svg style="position:absolute;left:1107.30px;top:1256.70px;" width="19" height="19" viewBox="0 0 19 19" fill="none"><circle cx="9.5" cy="9.5" r="8.3" stroke="#8b919a" stroke-width="1.7"/><path d="M8.7 4.6 V10.4 H13" stroke="#8b919a" stroke-width="1.7" stroke-linecap="round" stroke-linejoin="round"/></svg>
<div class="t" style="left:1135.30px;top:1256.04px;font-size:19.6px;color:#8b919a">&lt;0.01s</div>
<div style="position:absolute;left:1011.80px;top:266.60px;width:1.20px;height:972.60px;background:#b4b8be"></div>
<div style="position:absolute;left:1011.80px;top:317.00px;width:62.20px;height:1.20px;background:#b4b8be"></div>
<div style="position:absolute;left:1011.80px;top:1238.60px;width:62.20px;height:1.20px;background:#b4b8be"></div>
<div style="position:absolute;left:1055.10px;top:573.80px;width:1.20px;height:307.20px;background:#b4b8be"></div>
<div style="position:absolute;left:1055.10px;top:624.20px;width:61.90px;height:1.20px;background:#b4b8be"></div>
<div style="position:absolute;left:1098.40px;top:778.60px;width:1.20px;height:51.00px;background:#b4b8be"></div>
<div style="position:absolute;left:1098.40px;top:829.00px;width:61.60px;height:1.20px;background:#b4b8be"></div>
<div style="position:absolute;left:1055.10px;top:983.40px;width:1.20px;height:204.80px;background:#b4b8be"></div>
<div style="position:absolute;left:1055.10px;top:1033.80px;width:61.90px;height:1.20px;background:#b4b8be"></div>
<div style="position:absolute;left:2805.50px;top:103.30px;width:51.20px;height:50.00px;background:#ddf3f8;border-radius:8px"></div>
<svg style="position:absolute;left:2819.20px;top:117.00px;" width="25" height="24" viewBox="0 0 25 24" fill="none"><g transform="scale(0.82)"><rect x="2.3" y="2.5" width="16.3" height="9.1" rx="4.5" stroke="#3a8fa5" stroke-width="2.2"/><path d="M7.5 14.2 A4 4 0 0 0 11.5 18.1 H18.2 A4 4 0 0 0 22.2 14.1 V13 A4 4 0 0 0 20.3 9.6 M11.6 20.5 A4.5 4.5 0 0 0 16.1 25.2 H23.2 A4.5 4.5 0 0 0 27.7 20.7 V20 A4.5 4.5 0 0 0 25.4 16.3" stroke="#3a8fa5" stroke-width="2.2" stroke-linecap="round"/></g></svg>
<svg style="position:absolute;left:2875.00px;top:116.00px;" width="26" height="25" viewBox="0 0 26 25" fill="none"><path d="M3.5 9 V6 A3 3 0 0 1 6.5 3 H9 M17.7 3 H20.2 A3 3 0 0 1 23.2 6 V9 M23.2 16.6 V19.6 A3 3 0 0 1 20.2 22.6 H17.7 M9 22.6 H6.5 A3 3 0 0 1 3.5 19.6 V16.6" stroke="#2b3036" stroke-width="1.9" stroke-linecap="round" stroke-linejoin="round"/></svg>
<svg style="position:absolute;left:2934.00px;top:117.00px;" width="24" height="23" viewBox="0 0 24 23" fill="none"><path d="M4 3 L21 19.8 M21 3 L4 19.8" stroke="#2b3036" stroke-width="1.8" stroke-linecap="round"/></svg>
<div style="position:absolute;left:1676.00px;top:187.90px;width:36.00px;height:36.00px;background:#cff1dc;border-radius:50%"></div>
<svg style="position:absolute;left:1676.00px;top:187.90px;" width="36" height="36" viewBox="0 0 36 36" fill="none"><circle cx="18" cy="18" r="9.6" stroke="#3a8a5c" stroke-width="1.5"/><path d="M14.5 18.3 L17 20.6 L21 16.6" stroke="#3a8a5c" stroke-width="1.6" stroke-linecap="round" stroke-linejoin="round"/></svg>
<div class="t" style="left:1725.00px;top:194.40px;font-size:24px;color:#2b3036;-webkit-text-stroke:0.62px #2b3036;letter-spacing:0.408px;">execute_tool</div>
<div style="position:absolute;left:1886.30px;top:190.30px;width:50.40px;height:31.50px;background:#e8eaee;border-radius:7px"></div>
<div class="t" style="left:1892.90px;top:195.55px;font-size:17px;color:#1c1e21;-webkit-text-stroke:0.50px #1c1e21;letter-spacing:-0.176px;">2583</div>
<svg style="position:absolute;left:2826.50px;top:194.50px;" width="26" height="26" viewBox="0 0 26 26" fill="none"><path d="M12.6 4.14 A8.45 8.45 0 1 0 18.8 11.56" stroke="#2b3036" stroke-width="1.7" stroke-linecap="round"/><circle cx="7.1" cy="10.4" r="1.25" fill="#2b3036"/><circle cx="14.1" cy="10.4" r="1.25" fill="#2b3036"/><path d="M6.8 15.2 H14.8 A4 2.4 0 0 1 6.8 15.2 Z" fill="#2b3036"/><path d="M18.7 0.8 v7.4 M15 4.5 h7.4" stroke="#2b3036" stroke-width="1.7" stroke-linecap="round"/></svg>
<svg style="position:absolute;left:2870.50px;top:194.00px;" width="26" height="26" viewBox="0 0 26 26" fill="none"><path d="M12 2.2 A10 10 0 1 0 12.5 22.2 H21.3 L20.2 19.6 A10.2 10.2 0 0 0 22 12.3 A10 10 0 0 0 12 2.2 Z" stroke="#2b3036" stroke-width="1.7" stroke-linejoin="round"/><circle cx="7.6" cy="12.3" r="1.05" fill="#2b3036"/><circle cx="12" cy="12.3" r="1.05" fill="#2b3036"/><circle cx="16.4" cy="12.3" r="1.05" fill="#2b3036"/></svg>
<svg style="position:absolute;left:2932.00px;top:198.00px;" width="30" height="16" viewBox="0 0 30 16" fill="none"><circle cx="6" cy="8.3" r="2.7" stroke="#2b3036" stroke-width="1.9"/><circle cx="14.5" cy="8.3" r="2.7" stroke="#2b3036" stroke-width="1.9"/><circle cx="23" cy="8.3" r="2.7" stroke="#2b3036" stroke-width="1.9"/></svg>
<div class="t" style="left:1677.30px;top:263.27px;font-size:20.5px;color:#2b3036;-webkit-text-stroke:0.53px #2b3036;letter-spacing:0.024px;">Call</div>
<div class="t" style="left:1765.00px;top:263.70px;font-size:20px;color:#7b828c;-webkit-text-stroke:0.52px #7b828c;letter-spacing:0.062px;">Code</div>
<div class="t" style="left:1865.30px;top:263.27px;font-size:20.5px;color:#7b828c;-webkit-text-stroke:0.53px #7b828c;letter-spacing:0.153px;">Feedback</div>
<div class="t" style="left:2009.30px;top:262.85px;font-size:21px;color:#7b828c;-webkit-text-stroke:0.55px #7b828c;letter-spacing:0.373px;">Summary</div>
<div class="t" style="left:2153.80px;top:264.55px;font-size:19px;color:#7b828c;-webkit-text-stroke:0.50px #7b828c;letter-spacing:0.202px;">Use</div>
<div style="position:absolute;left:1676.00px;top:300.00px;width:1296.00px;height:1.00px;background:#dcdfe3"></div>
<div style="position:absolute;left:1676.00px;top:298.80px;width:37.00px;height:2.00px;background:#5a9bb0"></div>
<div style="position:absolute;left:1676.00px;top:301.00px;width:1296.00px;height:1352.50px;border:1px solid #e0e3e8;border-top:none;box-sizing:border-box;background:#fff"></div>
<div style="position:absolute;left:1838.00px;top:300.50px;width:2.20px;height:2.20px;background:#111;border-radius:1px"></div>
<div style="position:absolute;left:1677.3px;top:301.1px;width:1292.70px;height:1350.60px;overflow:hidden">
<div class="t cd" style="left:33.46px;top:12.05px;font-family:'Liberation Mono', monospace;font-size:19.28px;color:#3a7a93;width:23.14px;text-align:right">27</div>
<div style="position:absolute;left:99.70px;top:6.80px;width:1px;height:28.80px;background:#d3d3d3"></div>
<div style="position:absolute;left:122.70px;top:6.80px;width:1px;height:28.80px;background:#d3d3d3"></div>
<div class="t cd" style="left:100.20px;top:12.05px;font-family:'Liberation Mono', monospace;font-size:19.28px;color:#111111">    {</div>
<div class="t cd" style="left:33.46px;top:40.85px;font-family:'Liberation Mono', monospace;font-size:19.28px;color:#3a7a93;width:23.14px;text-align:right">28</div>
<div style="position:absolute;left:99.70px;top:35.60px;width:1px;height:28.80px;background:#d3d3d3"></div>
<div style="position:absolute;left:122.70px;top:35.60px;width:1px;height:28.80px;background:#d3d3d3"></div>
<div style="position:absolute;left:145.70px;top:35.60px;width:1px;height:28.80px;background:#d3d3d3"></div>
<div class="t cd" style="left:100.20px;top:40.85px;font-family:'Liberation Mono', monospace;font-size:19.28px;color:#111111">      <span style="color:#a3312f">&quot;_type&quot;</span>: <span style="color:#1c55a6">&quot;Function&quot;</span>,</div>
<div class="t cd" style="left:33.46px;top:69.65px;font-family:'Liberation Mono', monospace;font-size:19.28px;color:#3a7a93;width:23.14px;text-align:right">29</div>
<div style="position:absolute;left:99.70px;top:64.40px;width:1px;height:28.80px;background:#d3d3d3"></div>
<div style="position:absolute;left:122.70px;top:64.40px;width:1px;height:28.80px;background:#d3d3d3"></div>
<div style="position:absolute;left:145.70px;top:64.40px;width:1px;height:28.80px;background:#d3d3d3"></div>
<div class="t cd" style="left:100.20px;top:69.65px;font-family:'Liberation Mono', monospace;font-size:19.28px;color:#111111">      <span style="color:#a3312f">&quot;arguments&quot;</span>: <span style="color:#1c55a6">&quot;{\&quot;agents\&quot;: [\&quot;Visualization Agent\&quot;], \&quot;query\&quot;: \&quot;Plot a line chart for the data provided\&quot;}&quot;</span>,</div>
<div class="t cd" style="left:33.46px;top:98.45px;font-family:'Liberation Mono', monospace;font-size:19.28px;color:#3a7a93;width:23.14px;text-align:right">30</div>
<div style="position:absolute;left:99.70px;top:93.20px;width:1px;height:28.80px;background:#d3d3d3"></div>
<div style="position:absolute;left:122.70px;top:93.20px;width:1px;height:28.80px;background:#d3d3d3"></div>
<div style="position:absolute;left:145.70px;top:93.20px;width:1px;height:28.80px;background:#d3d3d3"></div>
<div class="t cd" style="left:100.20px;top:98.45px;font-family:'Liberation Mono', monospace;font-size:19.28px;color:#111111">      <span style="color:#a3312f">&quot;name&quot;</span>: <span style="color:#1c55a6">&quot;send_query_to_agents&quot;</span>,</div>
<div class="t cd" style="left:33.46px;top:127.25px;font-family:'Liberation Mono', monospace;font-size:19.28px;color:#3a7a93;width:23.14px;text-align:right">31</div>
<div style="position:absolute;left:99.70px;top:122.00px;width:1px;height:28.80px;background:#d3d3d3"></div>
<div style="position:absolute;left:122.70px;top:122.00px;width:1px;height:28.80px;background:#d3d3d3"></div>
<div style="position:absolute;left:145.70px;top:122.00px;width:1px;height:28.80px;background:#d3d3d3"></div>
<div class="t cd" style="left:100.20px;top:127.25px;font-family:'Liberation Mono', monospace;font-size:19.28px;color:#111111">      <span style="color:#a3312f">&quot;_class_name&quot;</span>: <span style="color:#1c55a6">&quot;Function&quot;</span>,</div>
<div class="t cd" style="left:33.46px;top:156.05px;font-family:'Liberation Mono', monospace;font-size:19.28px;color:#3a7a93;width:23.14px;text-align:right">32</div>
<div style="position:absolute;left:99.70px;top:150.80px;width:1px;height:28.80px;background:#d3d3d3"></div>
<div style="position:absolute;left:122.70px;top:150.80px;width:1px;height:28.80px;background:#d3d3d3"></div>
<div style="position:absolute;left:145.70px;top:150.80px;width:1px;height:28.80px;background:#d3d3d3"></div>
<div class="t cd" style="left:100.20px;top:156.05px;font-family:'Liberation Mono', monospace;font-size:19.28px;color:#111111">      <span style="color:#a3312f">&quot;_bases&quot;</span>: [</div>
<div class="t cd" style="left:33.46px;top:184.85px;font-family:'Liberation Mono', monospace;font-size:19.28px;color:#3a7a93;width:23.14px;text-align:right">33</div>
<div style="position:absolute;left:99.70px;top:179.60px;width:1px;height:28.80px;background:#d3d3d3"></div>
<div style="position:absolute;left:122.70px;top:179.60px;width:1px;height:28.80px;background:#d3d3d3"></div>
<div style="position:absolute;left:145.70px;top:179.60px;width:1px;height:28.80px;background:#d3d3d3"></div>
<div style="position:absolute;left:168.70px;top:179.60px;width:1px;height:28.80px;background:#d3d3d3"></div>
<div class="t cd" style="left:100.20px;top:184.85px;font-family:'Liberation Mono', monospace;font-size:19.28px;color:#111111">        <span style="color:#1c55a6">&quot;BaseModel&quot;</span>,</div>
<div class="t cd" style="left:33.46px;top:213.65px;font-family:'Liberation Mono', monospace;font-size:19.28px;color:#3a7a93;width:23.14px;text-align:right">34</div>
<div style="position:absolute;left:99.70px;top:208.40px;width:1px;height:28.80px;background:#d3d3d3"></div>
<div style="position:absolute;left:122.70px;top:208.40px;width:1px;height:28.80px;background:#d3d3d3"></div>
<div style="position:absolute;left:145.70px;top:208.40px;width:1px;height:28.80px;background:#d3d3d3"></div>
<div style="position:absolute;left:168.70px;top:208.40px;width:1px;height:28.80px;background:#d3d3d3"></div>
<div class="t cd" style="left:100.20px;top:213.65px;font-family:'Liberation Mono', monospace;font-size:19.28px;color:#111111">        <span style="color:#1c55a6">&quot;BaseModel&quot;</span></div>
<div class="t cd" style="left:33.46px;top:242.45px;font-family:'Liberation Mono', monospace;font-size:19.28px;color:#3a7a93;width:23.14px;text-align:right">35</div>
<div style="position:absolute;left:99.70px;top:237.20px;width:1px;height:28.80px;background:#d3d3d3"></div>
<div style="position:absolute;left:122.70px;top:237.20px;width:1px;height:28.80px;background:#d3d3d3"></div>
<div style="position:absolute;left:145.70px;top:237.20px;width:1px;height:28.80px;background:#d3d3d3"></div>
<div class="t cd" style="left:100.20px;top:242.45px;font-family:'Liberation Mono', monospace;font-size:19.28px;color:#111111">      ]</div>
<div class="t cd" style="left:33.46px;top:271.25px;font-family:'Liberation Mono', monospace;font-size:19.28px;color:#3a7a93;width:23.14px;text-align:right">36</div>
<div style="position:absolute;left:99.70px;top:266.00px;width:1px;height:28.80px;background:#d3d3d3"></div>
<div style="position:absolute;left:122.70px;top:266.00px;width:1px;height:28.80px;background:#d3d3d3"></div>
<div class="t cd" style="left:100.20px;top:271.25px;font-family:'Liberation Mono', monospace;font-size:19.28px;color:#111111">    }</div>
<div class="t cd" style="left:33.46px;top:300.05px;font-family:'Liberation Mono', monospace;font-size:19.28px;color:#3a7a93;width:23.14px;text-align:right">37</div>
<div style="position:absolute;left:99.70px;top:294.80px;width:1px;height:28.80px;background:#d3d3d3"></div>
<div class="t cd" style="left:100.20px;top:300.05px;font-family:'Liberation Mono', monospace;font-size:19.28px;color:#111111">  ],</div>
<div class="t cd" style="left:33.46px;top:328.85px;font-family:'Liberation Mono', monospace;font-size:19.28px;color:#3a7a93;width:23.14px;text-align:right">38</div>
<div style="position:absolute;left:99.70px;top:323.60px;width:1px;height:28.80px;background:#d3d3d3"></div>
<div class="t cd" style="left:100.20px;top:328.85px;font-family:'Liberation Mono', monospace;font-size:19.28px;color:#111111">  [</div>
<div class="t cd" style="left:33.46px;top:357.65px;font-family:'Liberation Mono', monospace;font-size:19.28px;color:#3a7a93;width:23.14px;text-align:right">39</div>
<div style="position:absolute;left:99.70px;top:352.40px;width:1px;height:28.80px;background:#d3d3d3"></div>
<div style="position:absolute;left:122.70px;top:352.40px;width:1px;height:28.80px;background:#d3d3d3"></div>
<div class="t cd" style="left:100.20px;top:357.65px;font-family:'Liberation Mono', monospace;font-size:19.28px;color:#111111">    {</div>
<div class="t cd" style="left:33.46px;top:386.45px;font-family:'Liberation Mono', monospace;font-size:19.28px;color:#3a7a93;width:23.14px;text-align:right">40</div>
<div style="position:absolute;left:99.70px;top:381.20px;width:1px;height:28.80px;background:#d3d3d3"></div>
<div style="position:absolute;left:122.70px;top:381.20px;width:1px;height:28.80px;background:#d3d3d3"></div>
<div style="position:absolute;left:145.70px;top:381.20px;width:1px;height:28.80px;background:#d3d3d3"></div>
<div class="t cd" style="left:100.20px;top:386.45px;font-family:'Liberation Mono', monospace;font-size:19.28px;color:#111111">      <span style="color:#a3312f">&quot;_type&quot;</span>: <span style="color:#1c55a6">&quot;Function&quot;</span>,</div>
<div class="t cd" style="left:33.46px;top:415.25px;font-family:'Liberation Mono', monospace;font-size:19.28px;color:#3a7a93;width:23.14px;text-align:right">41</div>
<div style="position:absolute;left:99.70px;top:410.00px;width:1px;height:28.80px;background:#d3d3d3"></div>
<div style="position:absolute;left:122.70px;top:410.00px;width:1px;height:28.80px;background:#d3d3d3"></div>
<div style="position:absolute;left:145.70px;top:410.00px;width:1px;height:28.80px;background:#d3d3d3"></div>
<div class="t cd" style="left:100.20px;top:415.25px;font-family:'Liberation Mono', monospace;font-size:19.28px;color:#111111">      <span style="color:#a3312f">&quot;arguments&quot;</span>: <span style="color:#1c55a6">&quot;{\&quot;data\&quot;:\&quot;house_size (m3), house_price ($)\\n90, 100\\n80, 90\\n100, 120\\n90, 100\&quot;}&quot;</span>,</div>
<div class="t cd" style="left:33.46px;top:444.05px;font-family:'Liberation Mono', monospace;font-size:19.28px;color:#3a7a93;width:23.14px;text-align:right">42</div>
<div style="position:absolute;left:99.70px;top:438.80px;width:1px;height:28.80px;background:#d3d3d3"></div>
<div style="position:absolute;left:122.70px;top:438.80px;width:1px;height:28.80px;background:#d3d3d3"></div>
<div style="position:absolute;left:145.70px;top:438.80px;width:1px;height:28.80px;background:#d3d3d3"></div>
<div class="t cd" style="left:100.20px;top:444.05px;font-family:'Liberation Mono', monospace;font-size:19.28px;color:#111111">      <span style="color:#a3312f">&quot;name&quot;</span>: <span style="color:#1c55a6">&quot;clean_data&quot;</span>,</div>
<div class="t cd" style="left:33.46px;top:472.85px;font-family:'Liberation Mono', monospace;font-size:19.28px;color:#3a7a93;width:23.14px;text-align:right">43</div>
<div style="position:absolute;left:99.70px;top:467.60px;width:1px;height:28.80px;background:#d3d3d3"></div>
<div style="position:absolute;left:122.70px;top:467.60px;width:1px;height:28.80px;background:#d3d3d3"></div>
<div style="position:absolute;left:145.70px;top:467.60px;width:1px;height:28.80px;background:#d3d3d3"></div>
<div class="t cd" style="left:100.20px;top:472.85px;font-family:'Liberation Mono', monospace;font-size:19.28px;color:#111111">      <span style="color:#a3312f">&quot;_class_name&quot;</span>: <span style="color:#1c55a6">&quot;Function&quot;</span>,</div>
<div class="t cd" style="left:33.46px;top:501.65px;font-family:'Liberation Mono', monospace;font-size:19.28px;color:#3a7a93;width:23.14px;text-align:right">44</div>
<div style="position:absolute;left:99.70px;top:496.40px;width:1px;height:28.80px;background:#d3d3d3"></div>
<div style="position:absolute;left:122.70px;top:496.40px;width:1px;height:28.80px;background:#d3d3d3"></div>
<div style="position:absolute;left:145.70px;top:496.40px;width:1px;height:28.80px;background:#d3d3d3"></div>
<div class="t cd" style="left:100.20px;top:501.65px;font-family:'Liberation Mono', monospace;font-size:19.28px;color:#111111">      <span style="color:#a3312f">&quot;_bases&quot;</span>: [</div>
<div class="t cd" style="left:33.46px;top:530.45px;font-family:'Liberation Mono', monospace;font-size:19.28px;color:#3a7a93;width:23.14px;text-align:right">45</div>
<div style="position:absolute;left:99.70px;top:525.20px;width:1px;height:28.80px;background:#d3d3d3"></div>
<div style="position:absolute;left:122.70px;top:525.20px;width:1px;height:28.80px;background:#d3d3d3"></div>
<div style="position:absolute;left:145.70px;top:525.20px;width:1px;height:28.80px;background:#d3d3d3"></div>
<div style="position:absolute;left:168.70px;top:525.20px;width:1px;height:28.80px;background:#d3d3d3"></div>
<div class="t cd" style="left:100.20px;top:530.45px;font-family:'Liberation Mono', monospace;font-size:19.28px;color:#111111">        <span style="color:#1c55a6">&quot;BaseModel&quot;</span>,</div>
<div class="t cd" style="left:33.46px;top:559.25px;font-family:'Liberation Mono', monospace;font-size:19.28px;color:#3a7a93;width:23.14px;text-align:right">46</div>
<div style="position:absolute;left:99.70px;top:554.00px;width:1px;height:28.80px;background:#d3d3d3"></div>
<div style="position:absolute;left:122.70px;top:554.00px;width:1px;height:28.80px;background:#d3d3d3"></div>
<div style="position:absolute;left:145.70px;top:554.00px;width:1px;height:28.80px;background:#d3d3d3"></div>
<div style="position:absolute;left:168.70px;top:554.00px;width:1px;height:28.80px;background:#d3d3d3"></div>
<div class="t cd" style="left:100.20px;top:559.25px;font-family:'Liberation Mono', monospace;font-size:19.28px;color:#111111">        <span style="color:#1c55a6">&quot;BaseModel&quot;</span></div>
<div class="t cd" style="left:33.46px;top:588.05px;font-family:'Liberation Mono', monospace;font-size:19.28px;color:#3a7a93;width:23.14px;text-align:right">47</div>
<div style="position:absolute;left:99.70px;top:582.80px;width:1px;height:28.80px;background:#d3d3d3"></div>
<div style="position:absolute;left:122.70px;top:582.80px;width:1px;height:28.80px;background:#d3d3d3"></div>
<div style="position:absolute;left:145.70px;top:582.80px;width:1px;height:28.80px;background:#d3d3d3"></div>
<div class="t cd" style="left:100.20px;top:588.05px;font-family:'Liberation Mono', monospace;font-size:19.28px;color:#111111">      ]</div>
<div class="t cd" style="left:33.46px;top:616.85px;font-family:'Liberation Mono', monospace;font-size:19.28px;color:#3a7a93;width:23.14px;text-align:right">48</div>
<div style="position:absolute;left:99.70px;top:611.60px;width:1px;height:28.80px;background:#d3d3d3"></div>
<div style="position:absolute;left:122.70px;top:611.60px;width:1px;height:28.80px;background:#d3d3d3"></div>
<div class="t cd" style="left:100.20px;top:616.85px;font-family:'Liberation Mono', monospace;font-size:19.28px;color:#111111">    }</div>
<div class="t cd" style="left:33.46px;top:645.65px;font-family:'Liberation Mono', monospace;font-size:19.28px;color:#3a7a93;width:23.14px;text-align:right">49</div>
<div style="position:absolute;left:99.70px;top:640.40px;width:1px;height:28.80px;background:#d3d3d3"></div>
<div class="t cd" style="left:100.20px;top:645.65px;font-family:'Liberation Mono', monospace;font-size:19.28px;color:#111111">  ],</div>
<div class="t cd" style="left:33.46px;top:674.45px;font-family:'Liberation Mono', monospace;font-size:19.28px;color:#3a7a93;width:23.14px;text-align:right">50</div>
<div style="position:absolute;left:99.70px;top:669.20px;width:1px;height:28.80px;background:#d3d3d3"></div>
<div class="t cd" style="left:100.20px;top:674.45px;font-family:'Liberation Mono', monospace;font-size:19.28px;color:#111111">  {</div>
<div class="t cd" style="left:33.46px;top:703.25px;font-family:'Liberation Mono', monospace;font-size:19.28px;color:#3a7a93;width:23.14px;text-align:right">51</div>
<div style="position:absolute;left:99.70px;top:698.00px;width:1px;height:28.80px;background:#d3d3d3"></div>
<div style="position:absolute;left:122.70px;top:698.00px;width:1px;height:28.80px;background:#d3d3d3"></div>
<div class="t cd" style="left:100.20px;top:703.25px;font-family:'Liberation Mono', monospace;font-size:19.28px;color:#111111">    <span style="color:#a3312f">&quot;role&quot;</span>: <span style="color:#1c55a6">&quot;tool&quot;</span>,</div>
<div class="t cd" style="left:33.46px;top:732.05px;font-family:'Liberation Mono', monospace;font-size:19.28px;color:#3a7a93;width:23.14px;text-align:right">52</div>
<div style="position:absolute;left:99.70px;top:726.80px;width:1px;height:28.80px;background:#d3d3d3"></div>
<div style="position:absolute;left:122.70px;top:726.80px;width:1px;height:28.80px;background:#d3d3d3"></div>
<div class="t cd" style="left:100.20px;top:732.05px;font-family:'Liberation Mono', monospace;font-size:19.28px;color:#111111">    <span style="color:#a3312f">&quot;name&quot;</span>: <span style="color:#1c55a6">&quot;clean_data&quot;</span>,</div>
<div class="t cd" style="left:33.46px;top:760.85px;font-family:'Liberation Mono', monospace;font-size:19.28px;color:#3a7a93;width:23.14px;text-align:right">53</div>
<div style="position:absolute;left:99.70px;top:755.60px;width:1px;height:28.80px;background:#d3d3d3"></div>
<div style="position:absolute;left:122.70px;top:755.60px;width:1px;height:28.80px;background:#d3d3d3"></div>
<div class="t cd" style="left:100.20px;top:760.85px;font-family:'Liberation Mono', monospace;font-size:19.28px;color:#111111">    <span style="color:#a3312f">&quot;content&quot;</span>: <span style="color:#1c55a6">&quot;{\&quot;cleaned_data\&quot;: {\&quot;house_size (m3)\&quot;: {\&quot;0\&quot;: 90, \&quot;1\&quot;: 80, \&quot;2\&quot;: 100}, \&quot; house_price ($)\&quot;: {}}}&quot;</span></div>
<div class="t cd" style="left:33.46px;top:789.65px;font-family:'Liberation Mono', monospace;font-size:19.28px;color:#3a7a93;width:23.14px;text-align:right">54</div>
<div style="position:absolute;left:99.70px;top:784.40px;width:1px;height:28.80px;background:#d3d3d3"></div>
<div class="t cd" style="left:100.20px;top:789.65px;font-family:'Liberation Mono', monospace;font-size:19.28px;color:#111111">  },</div>
<div class="t cd" style="left:33.46px;top:818.45px;font-family:'Liberation Mono', monospace;font-size:19.28px;color:#3a7a93;width:23.14px;text-align:right">55</div>
<div style="position:absolute;left:99.70px;top:813.20px;width:1px;height:28.80px;background:#d3d3d3"></div>
<div class="t cd" style="left:100.20px;top:818.45px;font-family:'Liberation Mono', monospace;font-size:19.28px;color:#111111">  [</div>
<div class="t cd" style="left:33.46px;top:847.25px;font-family:'Liberation Mono', monospace;font-size:19.28px;color:#3a7a93;width:23.14px;text-align:right">56</div>
<div style="position:absolute;left:99.70px;top:842.00px;width:1px;height:28.80px;background:#d3d3d3"></div>
<div style="position:absolute;left:122.70px;top:842.00px;width:1px;height:28.80px;background:#d3d3d3"></div>
<div class="t cd" style="left:100.20px;top:847.25px;font-family:'Liberation Mono', monospace;font-size:19.28px;color:#111111">    {</div>
<div class="t cd" style="left:33.46px;top:876.05px;font-family:'Liberation Mono', monospace;font-size:19.28px;color:#3a7a93;width:23.14px;text-align:right">57</div>
<div style="position:absolute;left:99.70px;top:870.80px;width:1px;height:28.80px;background:#d3d3d3"></div>
<div style="position:absolute;left:122.70px;top:870.80px;width:1px;height:28.80px;background:#d3d3d3"></div>
<div style="position:absolute;left:145.70px;top:870.80px;width:1px;height:28.80px;background:#d3d3d3"></div>
<div class="t cd" style="left:100.20px;top:876.05px;font-family:'Liberation Mono', monospace;font-size:19.28px;color:#111111">      <span style="color:#a3312f">&quot;_type&quot;</span>: <span style="color:#1c55a6">&quot;Function&quot;</span>,</div>
<div class="t cd" style="left:33.46px;top:904.85px;font-family:'Liberation Mono', monospace;font-size:19.28px;color:#3a7a93;width:23.14px;text-align:right">58</div>
<div style="position:absolute;left:99.70px;top:899.60px;width:1px;height:28.80px;background:#d3d3d3"></div>
<div style="position:absolute;left:122.70px;top:899.60px;width:1px;height:28.80px;background:#d3d3d3"></div>
<div style="position:absolute;left:145.70px;top:899.60px;width:1px;height:28.80px;background:#d3d3d3"></div>
<div class="t cd" style="left:100.20px;top:904.85px;font-family:'Liberation Mono', monospace;font-size:19.28px;color:#111111">      <span style="color:#a3312f">&quot;arguments&quot;</span>: <span style="color:#1c55a6">&quot;{\&quot;data\&quot;:\&quot;house_size,house_price\\n90,100\\n80,90\\n100,120\\n90,100\&quot;}&quot;</span>,</div>
<div class="t cd" style="left:33.46px;top:933.65px;font-family:'Liberation Mono', monospace;font-size:19.28px;color:#3a7a93;width:23.14px;text-align:right">59</div>
<div style="position:absolute;left:99.70px;top:928.40px;width:1px;height:28.80px;background:#d3d3d3"></div>
<div style="position:absolute;left:122.70px;top:928.40px;width:1px;height:28.80px;background:#d3d3d3"></div>
<div style="position:absolute;left:145.70px;top:928.40px;width:1px;height:28.80px;background:#d3d3d3"></div>
<div class="t cd" style="left:100.20px;top:933.65px;font-family:'Liberation Mono', monospace;font-size:19.28px;color:#111111">      <span style="color:#a3312f">&quot;name&quot;</span>: <span style="color:#1c55a6">&quot;stat_analysis&quot;</span>,</div>
<div class="t cd" style="left:33.46px;top:962.45px;font-family:'Liberation Mono', monospace;font-size:19.28px;color:#3a7a93;width:23.14px;text-align:right">60</div>
<div style="position:absolute;left:99.70px;top:957.20px;width:1px;height:28.80px;background:#d3d3d3"></div>
<div style="position:absolute;left:122.70px;top:957.20px;width:1px;height:28.80px;background:#d3d3d3"></div>
<div style="position:absolute;left:145.70px;top:957.20px;width:1px;height:28.80px;background:#d3d3d3"></div>
<div class="t cd" style="left:100.20px;top:962.45px;font-family:'Liberation Mono', monospace;font-size:19.28px;color:#111111">      <span style="color:#a3312f">&quot;_class_name&quot;</span>: <span style="color:#1c55a6">&quot;Function&quot;</span>,</div>
<div class="t cd" style="left:33.46px;top:991.25px;font-family:'Liberation Mono', monospace;font-size:19.28px;color:#3a7a93;width:23.14px;text-align:right">61</div>
<div style="position:absolute;left:99.70px;top:986.00px;width:1px;height:28.80px;background:#d3d3d3"></div>
<div style="position:absolute;left:122.70px;top:986.00px;width:1px;height:28.80px;background:#d3d3d3"></div>
<div style="position:absolute;left:145.70px;top:986.00px;width:1px;height:28.80px;background:#d3d3d3"></div>
<div class="t cd" style="left:100.20px;top:991.25px;font-family:'Liberation Mono', monospace;font-size:19.28px;color:#111111">      <span style="color:#a3312f">&quot;_bases&quot;</span>: [</div>
<div class="t cd" style="left:33.46px;top:1020.05px;font-family:'Liberation Mono', monospace;font-size:19.28px;color:#3a7a93;width:23.14px;text-align:right">62</div>
<div style="position:absolute;left:99.70px;top:1014.80px;width:1px;height:28.80px;background:#d3d3d3"></div>
<div style="position:absolute;left:122.70px;top:1014.80px;width:1px;height:28.80px;background:#d3d3d3"></div>
<div style="position:absolute;left:145.70px;top:1014.80px;width:1px;height:28.80px;background:#d3d3d3"></div>
<div style="position:absolute;left:168.70px;top:1014.80px;width:1px;height:28.80px;background:#d3d3d3"></div>
<div class="t cd" style="left:100.20px;top:1020.05px;font-family:'Liberation Mono', monospace;font-size:19.28px;color:#111111">        <span style="color:#1c55a6">&quot;BaseModel&quot;</span>,</div>
<div class="t cd" style="left:33.46px;top:1048.85px;font-family:'Liberation Mono', monospace;font-size:19.28px;color:#3a7a93;width:23.14px;text-align:right">63</div>
<div style="position:absolute;left:99.70px;top:1043.60px;width:1px;height:28.80px;background:#d3d3d3"></div>
<div style="position:absolute;left:122.70px;top:1043.60px;width:1px;height:28.80px;background:#d3d3d3"></div>
<div style="position:absolute;left:145.70px;top:1043.60px;width:1px;height:28.80px;background:#d3d3d3"></div>
<div style="position:absolute;left:168.70px;top:1043.60px;width:1px;height:28.80px;background:#d3d3d3"></div>
<div class="t cd" style="left:100.20px;top:1048.85px;font-family:'Liberation Mono', monospace;font-size:19.28px;color:#111111">        <span style="color:#1c55a6">&quot;BaseModel&quot;</span></div>
<div class="t cd" style="left:33.46px;top:1077.65px;font-family:'Liberation Mono', monospace;font-size:19.28px;color:#3a7a93;width:23.14px;text-align:right">64</div>
<div style="position:absolute;left:99.70px;top:1072.40px;width:1px;height:28.80px;background:#d3d3d3"></div>
<div style="position:absolute;left:122.70px;top:1072.40px;width:1px;height:28.80px;background:#d3d3d3"></div>
<div style="position:absolute;left:145.70px;top:1072.40px;width:1px;height:28.80px;background:#d3d3d3"></div>
<div class="t cd" style="left:100.20px;top:1077.65px;font-family:'Liberation Mono', monospace;font-size:19.28px;color:#111111">      ]</div>
<div class="t cd" style="left:33.46px;top:1106.45px;font-family:'Liberation Mono', monospace;font-size:19.28px;color:#3a7a93;width:23.14px;text-align:right">65</div>
<div style="position:absolute;left:99.70px;top:1101.20px;width:1px;height:28.80px;background:#d3d3d3"></div>
<div style="position:absolute;left:122.70px;top:1101.20px;width:1px;height:28.80px;background:#d3d3d3"></div>
<div class="t cd" style="left:100.20px;top:1106.45px;font-family:'Liberation Mono', monospace;font-size:19.28px;color:#111111">    }</div>
<div class="t cd" style="left:33.46px;top:1135.25px;font-family:'Liberation Mono', monospace;font-size:19.28px;color:#3a7a93;width:23.14px;text-align:right">66</div>
<div style="position:absolute;left:99.70px;top:1130.00px;width:1px;height:28.80px;background:#d3d3d3"></div>
<div class="t cd" style="left:100.20px;top:1135.25px;font-family:'Liberation Mono', monospace;font-size:19.28px;color:#111111">  ],</div>
<div class="t cd" style="left:33.46px;top:1164.05px;font-family:'Liberation Mono', monospace;font-size:19.28px;color:#3a7a93;width:23.14px;text-align:right">67</div>
<div style="position:absolute;left:99.70px;top:1158.80px;width:1px;height:28.80px;background:#d3d3d3"></div>
<div class="t cd" style="left:100.20px;top:1164.05px;font-family:'Liberation Mono', monospace;font-size:19.28px;color:#111111">  {</div>
<div class="t cd" style="left:33.46px;top:1192.85px;font-family:'Liberation Mono', monospace;font-size:19.28px;color:#3a7a93;width:23.14px;text-align:right">68</div>
<div style="position:absolute;left:99.70px;top:1187.60px;width:1px;height:28.80px;background:#d3d3d3"></div>
<div style="position:absolute;left:122.70px;top:1187.60px;width:1px;height:28.80px;background:#d3d3d3"></div>
<div class="t cd" style="left:100.20px;top:1192.85px;font-family:'Liberation Mono', monospace;font-size:19.28px;color:#111111">    <span style="color:#a3312f">&quot;role&quot;</span>: <span style="color:#1c55a6">&quot;tool&quot;</span>,</div>
<div class="t cd" style="left:33.46px;top:1221.65px;font-family:'Liberation Mono', monospace;font-size:19.28px;color:#3a7a93;width:23.14px;text-align:right">69</div>
<div style="position:absolute;left:99.70px;top:1216.40px;width:1px;height:28.80px;background:#d3d3d3"></div>
<div style="position:absolute;left:122.70px;top:1216.40px;width:1px;height:28.80px;background:#d3d3d3"></div>
<div class="t cd" style="left:100.20px;top:1221.65px;font-family:'Liberation Mono', monospace;font-size:19.28px;color:#111111">    <span style="color:#a3312f">&quot;name&quot;</span>: <span style="color:#1c55a6">&quot;stat_analysis&quot;</span>,</div>
<div class="t cd" style="left:33.46px;top:1250.45px;font-family:'Liberation Mono', monospace;font-size:19.28px;color:#3a7a93;width:23.14px;text-align:right">70</div>
<div style="position:absolute;left:99.70px;top:1245.20px;width:1px;height:28.80px;background:#d3d3d3"></div>
<div style="position:absolute;left:122.70px;top:1245.20px;width:1px;height:28.80px;background:#d3d3d3"></div>
<div class="t cd" style="left:100.20px;top:1250.45px;font-family:'Liberation Mono', monospace;font-size:19.28px;color:#111111">    <span style="color:#a3312f">&quot;content&quot;</span>: <span style="color:#1c55a6">&quot;{\&quot;stats\&quot;: {\&quot;house_size\&quot;: {\&quot;count\&quot;: 4.0, \&quot;mean\&quot;: 90.0, \&quot;std\&quot;: 8.16496580927726}}}&quot;</span></div>
<div class="t cd" style="left:33.46px;top:1279.25px;font-family:'Liberation Mono', monospace;font-size:19.28px;color:#3a7a93;width:23.14px;text-align:right">71</div>
<div style="position:absolute;left:99.70px;top:1274.00px;width:1px;height:28.80px;background:#d3d3d3"></div>
<div class="t cd" style="left:100.20px;top:1279.25px;font-family:'Liberation Mono', monospace;font-size:19.28px;color:#111111">  }</div>
<div class="t cd" style="left:33.46px;top:1308.05px;font-family:'Liberation Mono', monospace;font-size:19.28px;color:#3a7a93;width:23.14px;text-align:right">72</div>
<div style="position:absolute;left:100.20px;top:1303.30px;width:11.57px;height:28.30px;background:#e9f0e6;box-shadow:inset 0 0 0 1px #b9b9b9"></div>
<div class="t cd" style="left:100.20px;top:1308.05px;font-family:'Liberation Mono', monospace;font-size:19.28px;color:#111111">]</div>
<div style="position:absolute;left:99.70px;top:0px;width:1px;height:6.80px;background:#d3d3d3"></div>
<div style="position:absolute;left:122.70px;top:0px;width:1px;height:6.80px;background:#d3d3d3"></div>
</div>
<div style="position:absolute;left:29.50px;top:1581.00px;width:77.00px;height:77.00px;background:#4fa6ba;border-radius:50%;box-shadow:0 5px 22px rgba(0,0,0,0.16)"></div>
<svg style="position:absolute;left:50.00px;top:1599.50px;" width="36" height="39" viewBox="0 0 36 39" fill="none"><path d="M0.5 6 a5.5 5.5 0 0 1 5.5-5.5 h23.5 a5.5 5.5 0 0 1 5.5 5.5 v32.5 l-9-4.2 h-20 a5.5 5.5 0 0 1 -5.5-5.5z" fill="#ffffff"/><path d="M6.25 23.9 A15.8 15.8 0 0 0 29.9 23.9" stroke="#4fa6ba" stroke-width="2" stroke-linecap="round"/></svg>
<svg style="position:absolute;left:0.00px;top:1676.00px;" width="14" height="14" viewBox="0 0 14 14" fill="none"><path d="M0 0 V14 H14 A13.5 13.5 0 0 1 0 0z" fill="#000"/></svg>
<svg style="position:absolute;left:2974.00px;top:1676.00px;" width="14" height="14" viewBox="0 0 14 14" fill="none"><path d="M14 0 V14 H0 A13.5 13.5 0 0 0 14 0z" fill="#000"/></svg></body></html>
